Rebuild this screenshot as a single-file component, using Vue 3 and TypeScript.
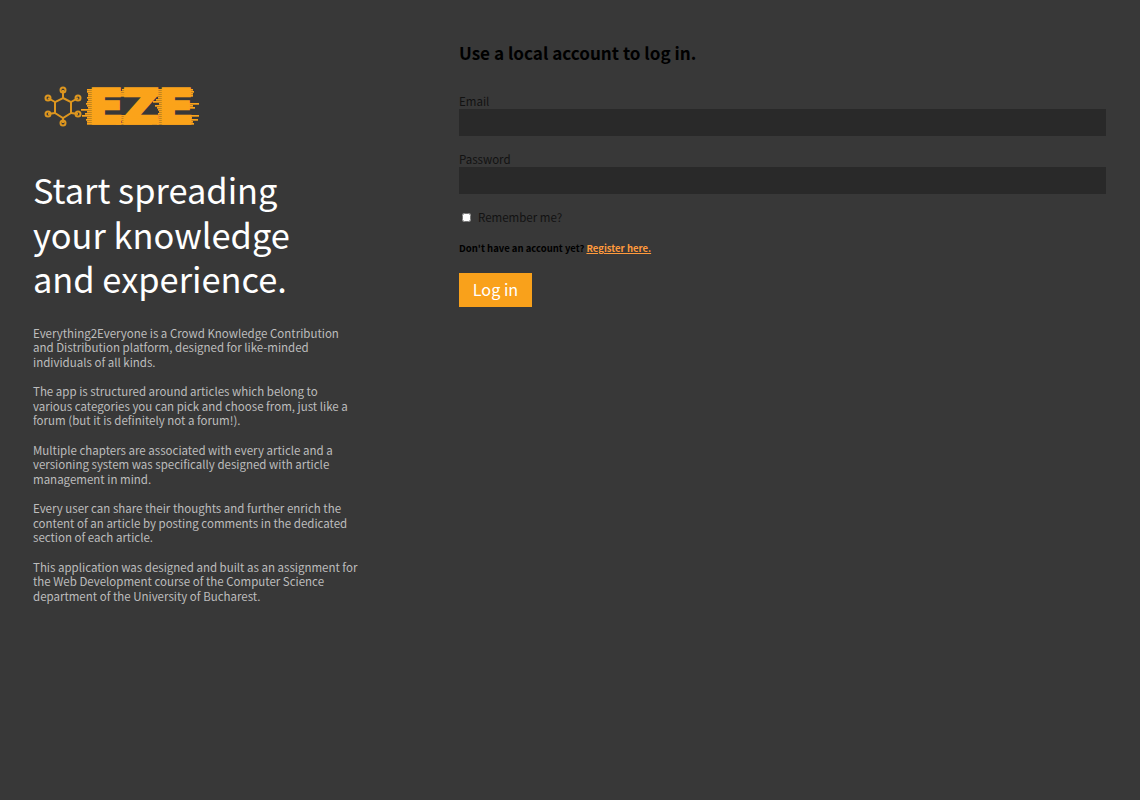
<script setup lang="ts">
const paragraphs: string[] = [
  'Everything2Everyone is a Crowd Knowledge Contribution and Distribution platform, designed for like-minded individuals of all kinds.',
  'The app is structured around articles which belong to various categories you can pick and choose from, just like a forum (but it is definitely not a forum!).',
  'Multiple chapters are associated with every article and a versioning system was specifically designed with article management in mind.',
  'Every user can share their thoughts and further enrich the content of an article by posting comments in the dedicated section of each article.',
  'This application was designed and built as an assignment for the Web Development course of the Computer Science department of the University of Bucharest.',
]

// node centres and the hexagon corner each one hangs off
const hexNodes: [number, number, number, number][] = [
  [19, 6, 19, 14],
  [34, 14, 27, 18],
  [34, 30, 27, 29],
  [19, 39, 19, 34],
  [4, 30, 11, 29],
  [4, 14, 11, 18],
]
const hexInner = '19,14 27,18 27,29 19,34 11,29 11,18'

// brush marks: x, y, width
const streaks: [number, number, number][] = []
const jitter = [1, 0, 3, 1, 6, 2, 0, 1, 4, 0, 2, 7, 1]
let step = 0
const addRow = (y: number, from: number, to: number) => {
  const left = jitter[step % 13]
  const right = jitter[(step + 5) % 13]
  step++
  streaks.push([from - left, y, to - from + left + right])
}
for (let y = 5; y <= 39; y += 2) {
  const topBar = y < 13
  const midBar = y > 18 && y < 25
  const lowBar = y > 30
  // first E, Z and last E, whole width only where the letter has a bar
  addRow(y, 44, topBar || midBar || lowBar ? 73 : 52)
  if (topBar || lowBar) addRow(y, 78, 108)
  addRow(y, 115, topBar || midBar || lowBar ? 148 : 124)
}
</script>

<template>
  <div class="page">
    <aside class="intro">
      <svg class="logo" width="160" height="44" viewBox="0 0 160 44">
        <g class="hex">
          <polygon :points="hexInner" />
          <line v-for="(n, i) in hexNodes" :key="i" :x1="n[0]" :y1="n[1]" :x2="n[2]" :y2="n[3]" />
          <circle v-for="(n, i) in hexNodes" :key="'c' + i" :cx="n[0]" :cy="n[1]" r="2.5" />
        </g>
        <text class="logo-text" x="45" y="39" textLength="104" lengthAdjust="spacingAndGlyphs">EZE</text>
        <rect v-for="(s, i) in streaks" :key="'s' + i" :x="s[0]" :y="s[1]" :width="s[2]" height="1.7" fill="#fba31a" />
      </svg>
      <h1>Start spreading<br />your knowledge<br />and experience.</h1>
      <p v-for="(text, i) in paragraphs" :key="i">{{ text }}</p>
    </aside>

    <main class="login">
      <h2>Use a local account to log in.</h2>
      <form @submit.prevent>
        <label class="field">
          <span>Email</span>
          <input type="email" />
        </label>
        <label class="field">
          <span>Password</span>
          <input type="password" />
        </label>
        <label class="remember">
          <input type="checkbox" />
          <span>Remember me?</span>
        </label>
        <p class="register">Don't have an account yet? <a href="#">Register here.</a></p>
        <button type="submit">Log in</button>
      </form>
    </main>
  </div>
</template>

<style>
html,
body {
  background: #383838;
}
</style>

<style scoped>
.page {
  display: grid;
  grid-template-columns: 459px 647px;
  min-height: 800px;
  background: #383838;
  color: #000;
  font-family: "Noto Sans CJK SC", "Noto Sans", sans-serif;
}

/* LEFT */
.intro {
  padding: 84px 0 0 33px;
}

.logo {
  display: block;
  margin-left: 11px;
}

.hex {
  fill: none;
  stroke: #dd961f;
  stroke-width: 2;
}

.logo-text {
  font-family: "DejaVu Sans", sans-serif;
  font-weight: 700;
  font-size: 46px;
  fill: #fba31a;
  stroke: #fba31a;
  stroke-width: 3.5;
}

h1 {
  margin: 39px 0 25px;
  color: #fff;
  font-size: 34.4px;
  font-weight: 400;
  line-height: 44.6px;
}

.intro p {
  width: 325px;
  margin: 0 0 14.7px;
  color: #bdbdbd;
  font-size: 11.5px;
  line-height: 14.6px;
}

/* RIGHT */
.login {
  padding-top: 41px;
}

h2 {
  margin: 0 0 30px;
  font-size: 17.1px;
  font-weight: 700;
  line-height: 24px;
}

.field {
  display: block;
  margin-bottom: 17px;
  color: #121212;
  font-size: 11.5px;
  line-height: 13px;
}

.field + .field {
  margin-bottom: 16px;
}

.field span {
  display: block;
  height: 14px;
}

.field input {
  display: block;
  box-sizing: border-box;
  width: 100%;
  height: 27px;
  border: none;
  background: #292929;
  outline: none;
}

.remember {
  display: flex;
  align-items: center;
  gap: 7px;
  margin: 14px 0 0 3px;
  color: #121212;
  font-size: 11.5px;
  line-height: 15px;
}

.remember input {
  width: 9px;
  height: 9px;
  margin: 0;
}

.register {
  margin: 16px 0 18px;
  font-size: 9.5px;
  font-weight: 700;
  line-height: 14px;
}

.register a {
  color: #ff9a3c;
}

button {
  display: block;
  width: 73px;
  height: 34px;
  padding: 0 0 2px;
  border: none;
  background: #f9a11b;
  color: #fff;
  font-family: inherit;
  font-size: 16.2px;
}
</style>
